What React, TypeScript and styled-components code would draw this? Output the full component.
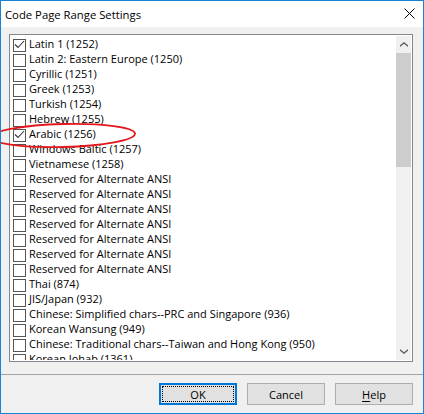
import React from "react";
import styled, { createGlobalStyle } from "styled-components";

const GlobalStyle = createGlobalStyle`
  html, body { margin: 0; padding: 0; background: #ffffff; }
  body { font-family: "Open Sans", "Liberation Sans", sans-serif; font-size: 11px; color: #000; }
  * { box-sizing: border-box; }
`;

const Window = styled.div`
  position: relative;
  width: 424px;
  height: 414px;
  border: 1px solid #1883d7;
  display: flex;
  flex-direction: column;
  background: #f0f0f0;
  overflow: hidden;
`;

const TitleBar = styled.div`
  height: 26px;
  flex-shrink: 0;
  background: #ffffff;
  display: flex;
  align-items: center;
  justify-content: space-between;
  padding-left: 4px;
`;

const Title = styled.span`
  font-size: 11.3px;
  line-height: 15px;
  color: #000;
  white-space: nowrap;
`;

const Close = styled.span`
  width: 11px;
  height: 11px;
  margin-right: 8px;
  align-self: flex-start;
  margin-top: 7px;
  display: flex;
`;

const Content = styled.div`
  flex: 1;
  display: flex;
  flex-direction: column;
`;

const ListArea = styled.div`
  padding: 7px 10px 0 8px;
`;

const ListBox = styled.div`
  height: 328px;
  border: 1px solid #828790;
  background: #ffffff;
  padding: 1px;
  display: flex;
`;

const Items = styled.div`
  flex: 1;
  overflow: hidden;
  padding-top: 1px;
`;

const Row = styled.div`
  height: 15px;
  display: flex;
  align-items: flex-start;
`;

const Box = styled.span`
  width: 13px;
  height: 13px;
  flex-shrink: 0;
  margin: 2px 3px 0 2px;
  border: 1px solid #555555;
  background: #ffffff;
  display: flex;
  align-items: center;
  justify-content: center;
`;

const Label = styled.span`
  line-height: 13px;
  white-space: nowrap;
`;

const ScrollBar = styled.div`
  width: 15px;
  flex-shrink: 0;
  background: #f0f0f0;
  display: flex;
  flex-direction: column;
`;

const Arrow = styled.div`
  height: 17px;
  flex-shrink: 0;
  display: flex;
  align-items: center;
  justify-content: center;
`;

const Thumb = styled.div<{ $h: number }>`
  height: ${(p) => p.$h}px;
  flex-shrink: 0;
  background: #cdcdcd;
`;

const Track = styled.div`
  flex: 1;
`;

const Separator = styled.div`
  height: 1px;
  margin-top: 12px;
  background: #a0a0a0;
`;

const ButtonRow = styled.div`
  display: flex;
  justify-content: flex-end;
  gap: 10px;
  padding: 8px 10px 8px 8px;
`;

const Button = styled.button<{ $default?: boolean }>`
  width: 78px;
  height: 22px;
  padding: 0;
  background: #e1e1e1;
  border: ${(p) => (p.$default ? "2px solid #0078d7" : "1px solid #adadad")};
  font-family: "Open Sans", "Liberation Sans", sans-serif;
  font-size: 11px;
  line-height: 15px;
  color: #000;
  outline: ${(p) => (p.$default ? "1px dotted #000" : "none")};
  outline-offset: -4px;
  display: flex;
  align-items: center;
  justify-content: center;
`;

const Access = styled.span`
  text-decoration: underline;
  text-underline-offset: 2px;
`;

const Annotation = styled.svg`
  position: absolute;
  left: -14px;
  top: 119px;
  width: 154px;
  height: 32px;
  overflow: visible;
  pointer-events: none;
`;

const items: { label: string; checked?: boolean }[] = [
  { label: "Latin 1 (1252)", checked: true },
  { label: "Latin 2: Eastern Europe (1250)" },
  { label: "Cyrillic (1251)" },
  { label: "Greek (1253)" },
  { label: "Turkish (1254)" },
  { label: "Hebrew (1255)" },
  { label: "Arabic (1256)", checked: true },
  { label: "Windows Baltic (1257)" },
  { label: "Vietnamese (1258)" },
  { label: "Reserved for Alternate ANSI" },
  { label: "Reserved for Alternate ANSI" },
  { label: "Reserved for Alternate ANSI" },
  { label: "Reserved for Alternate ANSI" },
  { label: "Reserved for Alternate ANSI" },
  { label: "Reserved for Alternate ANSI" },
  { label: "Reserved for Alternate ANSI" },
  { label: "Thai (874)" },
  { label: "JIS/Japan (932)" },
  { label: "Chinese: Simplified chars--PRC and Singapore (936)" },
  { label: "Korean Wansung (949)" },
  { label: "Chinese: Traditional chars--Taiwan and Hong Kong (950)" },
  { label: "Korean Johab (1361)" },
];

const Check = () => (
  <svg width="11" height="11" viewBox="0 0 11 11">
    <polyline points="1,4.5 4,7.5 10,1" fill="none" stroke="#333" strokeWidth="1.1" />
  </svg>
);

const Chevron = ({ down }: { down?: boolean }) => (
  <svg width="8" height="5" viewBox="0 0 8 5">
    <path
      d={down ? "M0 0 L4 3.2 L8 0 L8 1.8 L4 5 L0 1.8 Z" : "M0 5 L4 1.8 L8 5 L8 3.2 L4 0 L0 3.2 Z"}
      fill="#606060"
    />
  </svg>
);

export default function App() {
  return (
    <>
      <GlobalStyle />
      <Window>
        <TitleBar>
          <Title>Code Page Range Settings</Title>
          <Close>
            <svg width="11" height="11" viewBox="0 0 11 11">
              <path d="M0.5 0.5 L10.5 10.5 M10.5 0.5 L0.5 10.5" stroke="#000" strokeWidth="1" />
            </svg>
          </Close>
        </TitleBar>
        <Content>
          <ListArea>
            <ListBox>
              <Items>
                {items.map((it, i) => (
                  <Row key={i}>
                    <Box>{it.checked && <Check />}</Box>
                    <Label>{it.label}</Label>
                  </Row>
                ))}
              </Items>
              <ScrollBar>
                <Arrow>
                  <Chevron />
                </Arrow>
                <Thumb $h={114} />
                <Track />
                <Arrow>
                  <Chevron down />
                </Arrow>
              </ScrollBar>
            </ListBox>
          </ListArea>
          <Separator />
          <ButtonRow>
            <Button $default>OK</Button>
            <Button>Cancel</Button>
            <Button>
              <span>
                <Access>H</Access>elp
              </span>
            </Button>
          </ButtonRow>
        </Content>
        <Annotation viewBox="0 0 154 32">
          <ellipse
            cx="76"
            cy="15.5"
            rx="72"
            ry="11.5"
            fill="none"
            stroke="#e3161c"
            strokeWidth="1.8"
            transform="rotate(-1.5 76 15.5)"
          />
        </Annotation>
      </Window>
    </>
  );
}
